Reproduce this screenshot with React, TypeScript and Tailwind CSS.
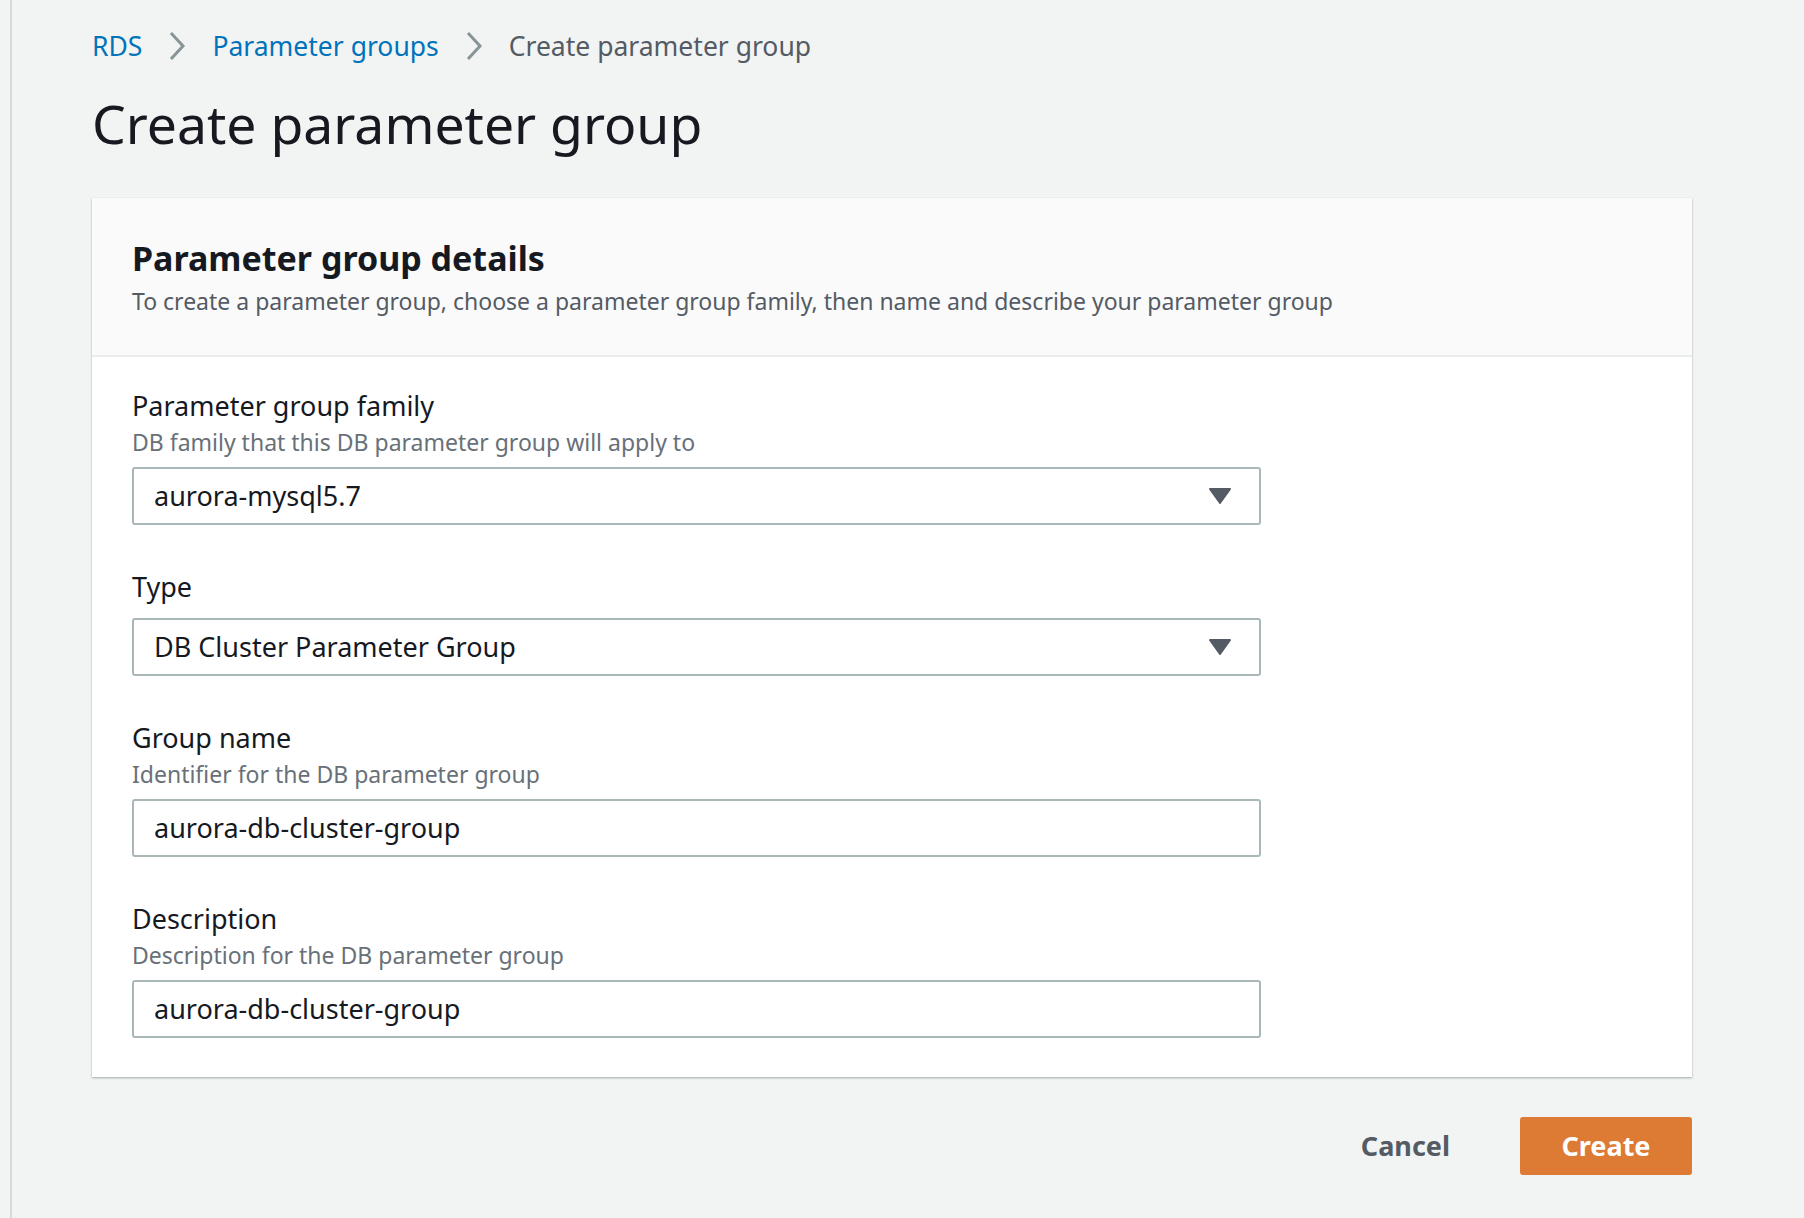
export default function App() {
  const f = { fontFamily: '"Noto Sans", "Open Sans", sans-serif' };
  const Tri = () => (
    <svg width="22" height="16" viewBox="0 0 22 16"><path d="M1 1h20L11 15z" fill="#545b64" strokeLinejoin="round" stroke="#545b64" strokeWidth="2" /></svg>
  );
  const Field = ({ label, desc, value, select }: { label: string; desc?: string; value: string; select?: boolean }) => (
    <div className="flex flex-col">
      <div className="text-[27px] leading-[36px] text-[#16191f]">{label}</div>
      {desc && <div className="mt-[3px] text-[23px] leading-[30px] text-[#687078]">{desc}</div>}
      <div className={`${desc ? 'mt-[10px]' : 'mt-[13px]'} w-[1129px] h-[58px] border-2 border-[#aab7b8] rounded-[3px] flex items-center justify-between pl-[20px] pr-[28px] text-[27px] text-[#16191f]`}>
        <span>{value}</span>
        {select && <Tri />}
      </div>
    </div>
  );
  return (
    <div style={f} className="w-[1804px] h-[1218px] bg-[#f2f3f3] flex">
      <div className="w-[12px] shrink-0 border-r-2 border-[#d5dbdb] bg-[#f2f3f3]" />
      <div className="flex flex-col pl-[80px] w-[1692px]">
        <div className="flex items-center gap-[26px] mt-[30px] text-[26.5px] leading-[32px]">
          <span className="text-[#0073bb]">RDS</span>
          <svg width="18" height="30" viewBox="0 0 18 30"><path d="M3 2l12 13L3 28" fill="none" stroke="#879596" strokeWidth="3" /></svg>
          <span className="text-[#0073bb]">Parameter groups</span>
          <svg width="18" height="30" viewBox="0 0 18 30"><path d="M3 2l12 13L3 28" fill="none" stroke="#879596" strokeWidth="3" /></svg>
          <span className="text-[#545b64]">Create parameter group</span>
        </div>
        <h1 className="mt-[30px] text-[53.5px] leading-[64px] text-[#16191f]">Create parameter group</h1>
        <div className="mt-[42px] w-[1600px] bg-white shadow-[0_1px_2px_rgba(0,28,36,0.35)] h-[879px]">
          <div className="bg-[#fafafa] border-b-2 border-[#eaeded] h-[159px] px-[40px] pt-[38px]">
            <div className="text-[34px] leading-[44px] font-bold text-[#16191f]">Parameter group details</div>
            <div className="text-[23px] leading-[32px] text-[#545b64] mt-[5px]">To create a parameter group, choose a parameter group family, then name and describe your parameter group</div>
          </div>
          <div className="px-[40px] pt-[31px] flex flex-col gap-[44px]">
            <Field label="Parameter group family" desc="DB family that this DB parameter group will apply to" value="aurora-mysql5.7" select />
            <Field label="Type" value="DB Cluster Parameter Group" select />
            <Field label="Group name" desc="Identifier for the DB parameter group" value="aurora-db-cluster-group" />
            <Field label="Description" desc="Description for the DB parameter group" value="aurora-db-cluster-group" />
          </div>
        </div>
        <div className="flex justify-end items-center w-[1600px] mt-[40px] gap-[70px]">
          <span className="text-[27px] font-bold text-[#545b64]">Cancel</span>
          <div className="w-[172px] h-[58px] bg-[#dd7a33] rounded-[3px] flex items-center justify-center text-[27px] font-bold text-white">Create</div>
        </div>
      </div>
    </div>
  );
}
